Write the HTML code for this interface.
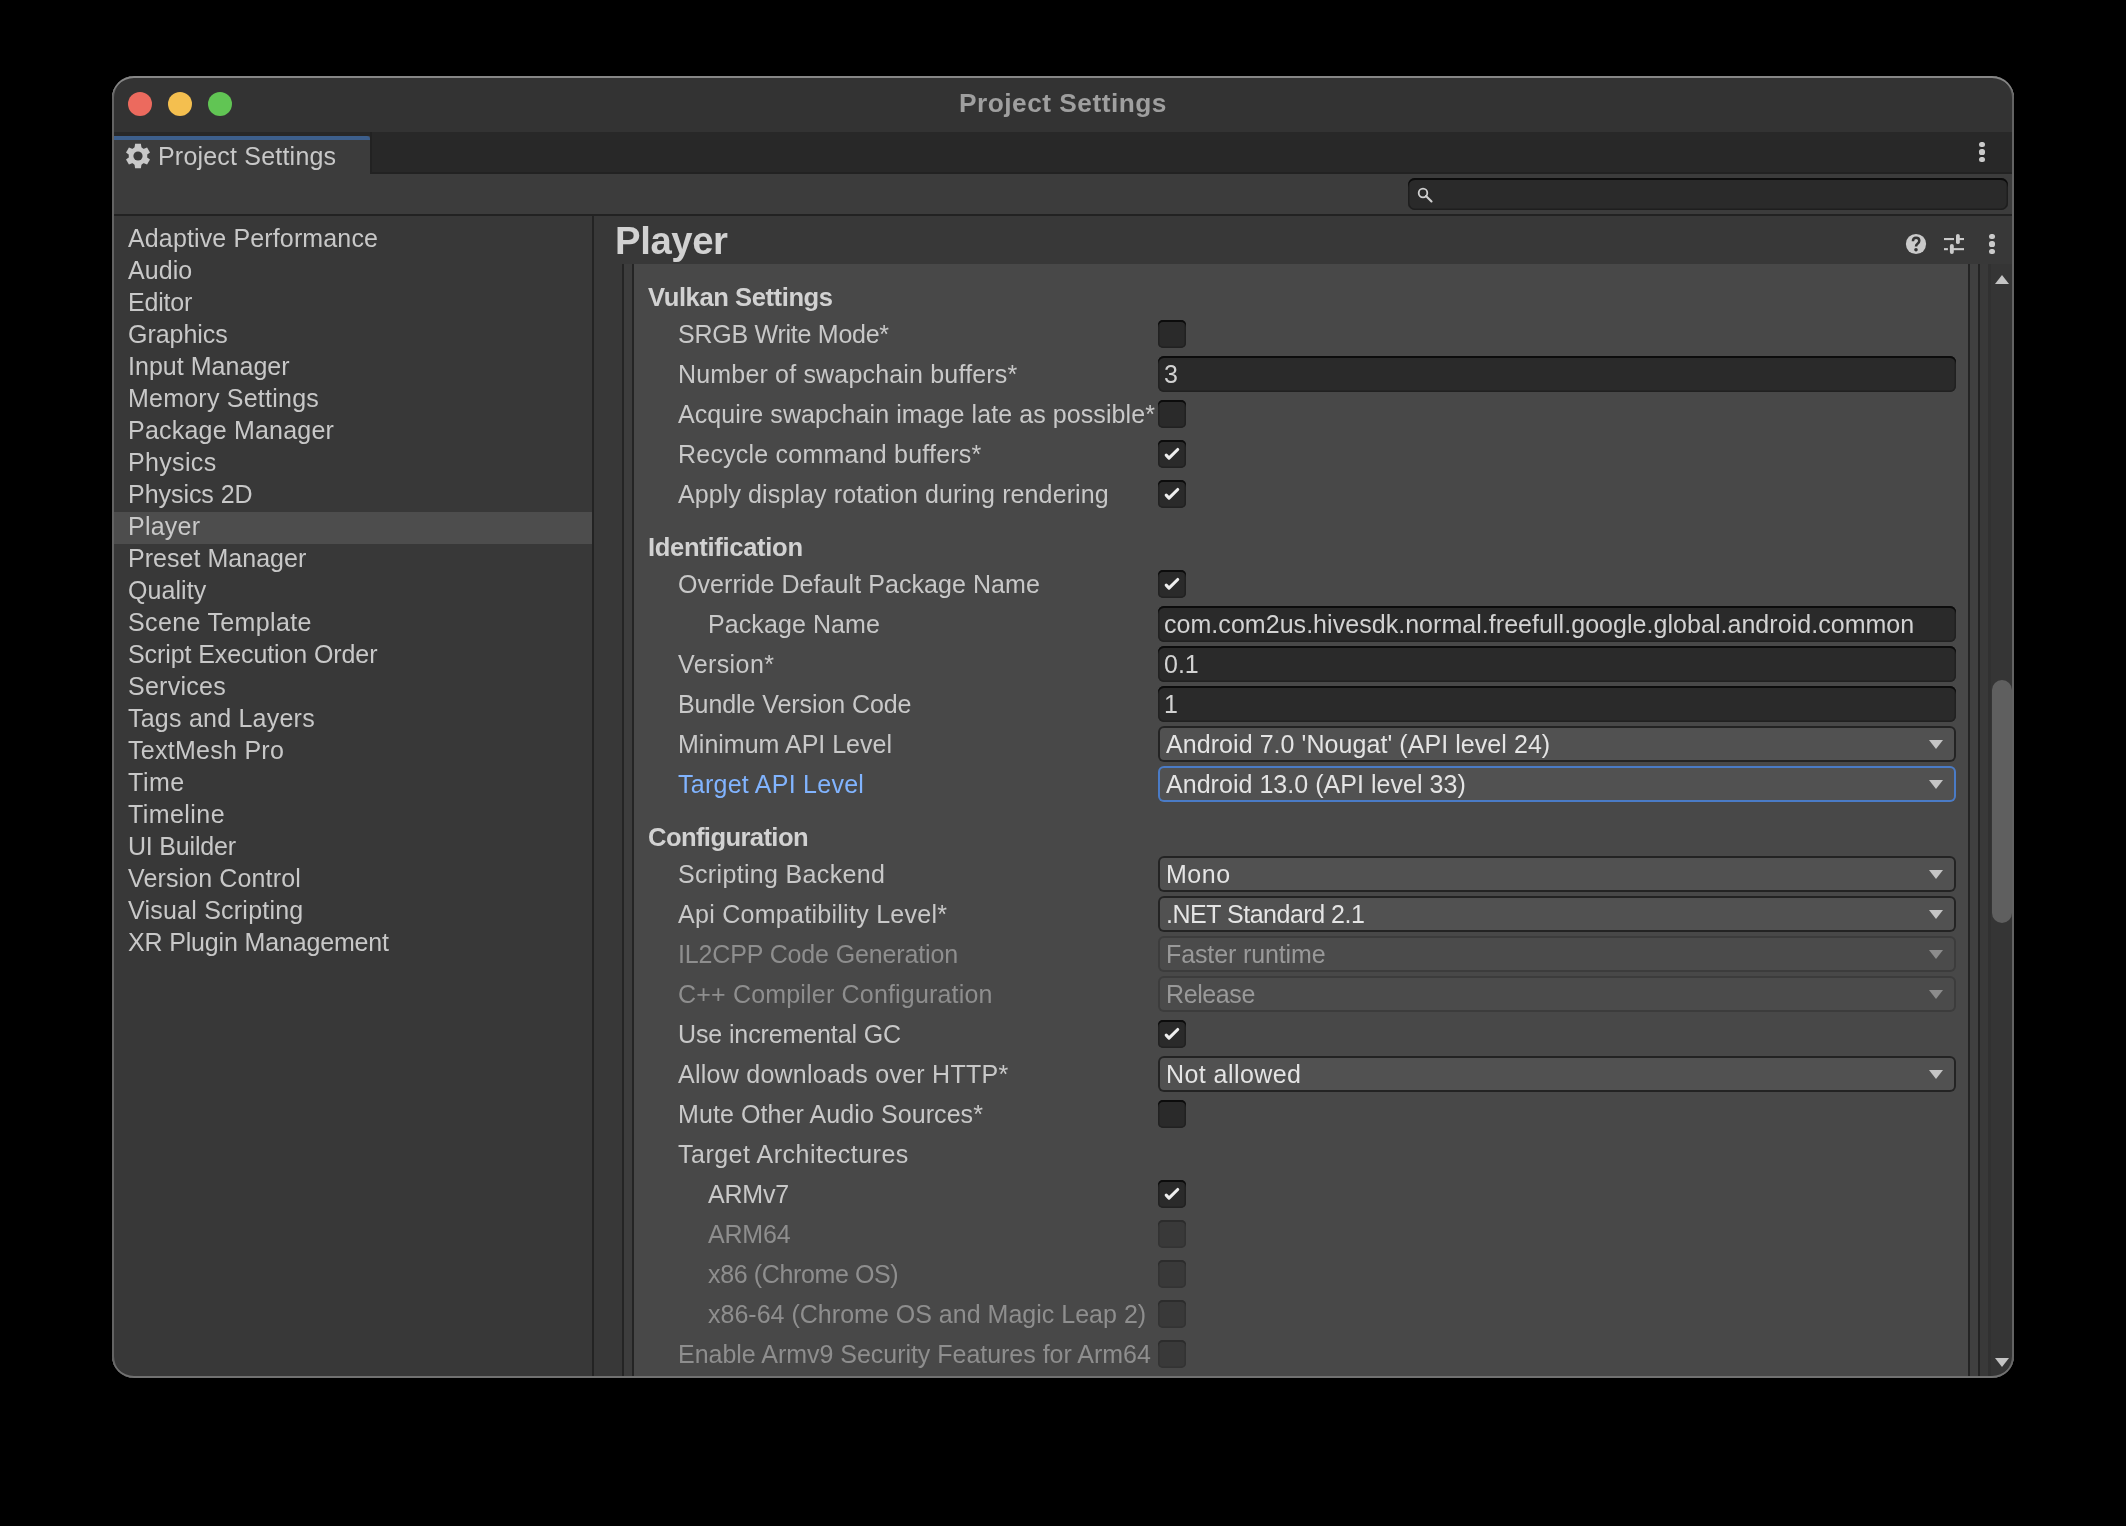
<!DOCTYPE html>
<html><head><meta charset="utf-8"><title>Project Settings</title>
<style>
html,body{margin:0;padding:0;background:#000;width:2126px;height:1526px;overflow:hidden;}
body{position:relative;font-family:"Liberation Sans",sans-serif;}
.t{position:absolute;white-space:nowrap;will-change:transform;}
.r{position:absolute;}
</style></head><body>
<div style="position:absolute;left:0;top:0;width:2126px;height:1526px;clip-path:inset(76px 112px 148px 112px round 22px)">
<div class="r" style="left:112px;top:76px;width:1902px;height:1302px;background:#383838"></div>
<div class="r" style="left:112px;top:76px;width:1902px;height:56px;background:#333333"></div>
<div class="r" style="left:128px;top:92px;width:24px;height:24px;background:#ec6a5e;border-radius:50%"></div>
<div class="r" style="left:168px;top:92px;width:24px;height:24px;background:#f4bf4f;border-radius:50%"></div>
<div class="r" style="left:208px;top:92px;width:24px;height:24px;background:#61c554;border-radius:50%"></div>
<div class="t" style="left:959.00px;top:82.99px;font-size:26.3px;line-height:40px;color:#9f9f9f;font-weight:700;letter-spacing:0.480px;">Project Settings</div>
<div class="r" style="left:112px;top:132px;width:1902px;height:42px;background:#282828"></div>
<div class="r" style="left:370px;top:132px;width:1644px;height:42px;background:#282828;box-shadow:inset 2px -2px 0 #222222"></div>
<div class="r" style="left:112px;top:136px;width:258px;height:38px;background:#3c3c3c"></div>
<div class="r" style="left:112px;top:136px;width:258px;height:4px;background:#3d5f8c;border-top-right-radius:3px"></div>
<svg class="r" style="left:125px;top:143px" width="26" height="26" viewBox="0 0 26 26"><g fill="#c9c9c9" transform="translate(13 13)"><circle r="9.3"/><path d="M-3.6 -7.5 L-2.9 -12.15 L2.9 -12.15 L3.6 -7.5 Z" transform="rotate(0)"/><path d="M-3.6 -7.5 L-2.9 -12.15 L2.9 -12.15 L3.6 -7.5 Z" transform="rotate(60)"/><path d="M-3.6 -7.5 L-2.9 -12.15 L2.9 -12.15 L3.6 -7.5 Z" transform="rotate(120)"/><path d="M-3.6 -7.5 L-2.9 -12.15 L2.9 -12.15 L3.6 -7.5 Z" transform="rotate(180)"/><path d="M-3.6 -7.5 L-2.9 -12.15 L2.9 -12.15 L3.6 -7.5 Z" transform="rotate(240)"/><path d="M-3.6 -7.5 L-2.9 -12.15 L2.9 -12.15 L3.6 -7.5 Z" transform="rotate(300)"/></g><circle cx="13" cy="13" r="4.6" fill="#3c3c3c"/></svg>
<div class="t" style="left:158.00px;top:135.94px;font-size:25px;line-height:40px;color:#c8c8c8;font-weight:400;letter-spacing:0.200px;">Project Settings</div>
<div class="r" style="left:1979.4px;top:141.9px;width:5.2px;height:5.2px;background:#cacaca;border-radius:50%"></div>
<div class="r" style="left:1979.4px;top:149.4px;width:5.2px;height:5.2px;background:#cacaca;border-radius:50%"></div>
<div class="r" style="left:1979.4px;top:156.9px;width:5.2px;height:5.2px;background:#cacaca;border-radius:50%"></div>
<div class="r" style="left:112px;top:174px;width:1902px;height:40px;background:#3c3c3c"></div>
<div class="r" style="left:1408px;top:178px;width:600px;height:32px;background:#2a2a2a;border-radius:7px;box-shadow: inset 0 2px 0 #0c0c0c, inset 0 0 0 1.5px #1e1e1e;"></div>
<svg class="r" style="left:1415px;top:185px" width="20" height="20" viewBox="0 0 20 20"><circle cx="8" cy="8" r="4.3" fill="none" stroke="#d0d0d0" stroke-width="1.8"/><path d="M11 11 L16.5 16.5" stroke="#d0d0d0" stroke-width="2.1" stroke-linecap="round"/></svg>
<div class="r" style="left:112px;top:214px;width:1902px;height:2px;background:#222222"></div>
<div class="r" style="left:112px;top:216px;width:480px;height:1162px;background:#383838"></div>
<div class="r" style="left:592px;top:216px;width:2px;height:1162px;background:#232323"></div>
<div class="t" style="left:128.40px;top:217.74px;font-size:25px;line-height:40px;color:#c8c8c8;font-weight:400;letter-spacing:0.137px;">Adaptive Performance</div>
<div class="t" style="left:128.40px;top:249.74px;font-size:25px;line-height:40px;color:#c8c8c8;font-weight:400;letter-spacing:0.050px;">Audio</div>
<div class="t" style="left:128.40px;top:281.74px;font-size:25px;line-height:40px;color:#c8c8c8;font-weight:400;letter-spacing:-0.200px;">Editor</div>
<div class="t" style="left:128.40px;top:313.74px;font-size:25px;line-height:40px;color:#c8c8c8;font-weight:400;letter-spacing:-0.029px;">Graphics</div>
<div class="t" style="left:128.40px;top:345.74px;font-size:25px;line-height:40px;color:#c8c8c8;font-weight:400;letter-spacing:0.033px;">Input Manager</div>
<div class="t" style="left:128.40px;top:377.74px;font-size:25px;line-height:40px;color:#c8c8c8;font-weight:400;letter-spacing:0.229px;">Memory Settings</div>
<div class="t" style="left:128.40px;top:409.74px;font-size:25px;line-height:40px;color:#c8c8c8;font-weight:400;letter-spacing:0.214px;">Package Manager</div>
<div class="t" style="left:128.40px;top:441.74px;font-size:25px;line-height:40px;color:#c8c8c8;font-weight:400;letter-spacing:0.333px;">Physics</div>
<div class="t" style="left:128.40px;top:473.74px;font-size:25px;line-height:40px;color:#c8c8c8;font-weight:400;letter-spacing:-0.044px;">Physics 2D</div>
<div class="r" style="left:112px;top:512px;width:480px;height:32px;background:#4d4d4d"></div>
<div class="t" style="left:128.40px;top:505.74px;font-size:25px;line-height:40px;color:#c8c8c8;font-weight:400;letter-spacing:0.240px;">Player</div>
<div class="t" style="left:128.40px;top:537.74px;font-size:25px;line-height:40px;color:#c8c8c8;font-weight:400;letter-spacing:0.031px;">Preset Manager</div>
<div class="t" style="left:128.40px;top:569.74px;font-size:25px;line-height:40px;color:#c8c8c8;font-weight:400;letter-spacing:0.067px;">Quality</div>
<div class="t" style="left:128.40px;top:601.74px;font-size:25px;line-height:40px;color:#c8c8c8;font-weight:400;letter-spacing:0.354px;">Scene Template</div>
<div class="t" style="left:128.40px;top:633.74px;font-size:25px;line-height:40px;color:#c8c8c8;font-weight:400;letter-spacing:-0.095px;">Script Execution Order</div>
<div class="t" style="left:128.40px;top:665.74px;font-size:25px;line-height:40px;color:#c8c8c8;font-weight:400;letter-spacing:0.257px;">Services</div>
<div class="t" style="left:128.40px;top:697.74px;font-size:25px;line-height:40px;color:#c8c8c8;font-weight:400;letter-spacing:0.229px;">Tags and Layers</div>
<div class="t" style="left:128.40px;top:729.74px;font-size:25px;line-height:40px;color:#c8c8c8;font-weight:400;letter-spacing:0.273px;">TextMesh Pro</div>
<div class="t" style="left:128.40px;top:761.74px;font-size:25px;line-height:40px;color:#c8c8c8;font-weight:400;letter-spacing:0.533px;">Time</div>
<div class="t" style="left:128.40px;top:793.74px;font-size:25px;line-height:40px;color:#c8c8c8;font-weight:400;letter-spacing:0.429px;">Timeline</div>
<div class="t" style="left:128.40px;top:825.74px;font-size:25px;line-height:40px;color:#c8c8c8;font-weight:400;letter-spacing:-0.200px;">UI Builder</div>
<div class="t" style="left:128.40px;top:857.74px;font-size:25px;line-height:40px;color:#c8c8c8;font-weight:400;letter-spacing:0.129px;">Version Control</div>
<div class="t" style="left:128.40px;top:889.74px;font-size:25px;line-height:40px;color:#c8c8c8;font-weight:400;letter-spacing:0.227px;">Visual Scripting</div>
<div class="t" style="left:128.40px;top:921.74px;font-size:25px;line-height:40px;color:#c8c8c8;font-weight:400;letter-spacing:-0.158px;">XR Plugin Management</div>
<div class="r" style="left:594px;top:216px;width:1418px;height:48px;background:#383838"></div>
<div class="t" style="left:615.00px;top:220.83px;font-size:38.3px;line-height:40px;color:#d2d2d2;font-weight:700;letter-spacing:-0.400px;">Player</div>
<svg class="r" style="left:1904px;top:232px" width="24" height="24" viewBox="0 0 24 24"><circle cx="12" cy="12" r="10.1" fill="#cacaca"/><path d="M8.9 9.3 C8.9 7 10.3 5.8 12.1 5.8 C14 5.8 15.3 7 15.3 8.8 C15.3 10.5 14.2 11.2 13.3 11.9 C12.5 12.5 12 13.1 12 14.4" fill="none" stroke="#333333" stroke-width="2.5"/><circle cx="12" cy="17.7" r="1.8" fill="#333333"/></svg>
<svg class="r" style="left:1942px;top:232px" width="24" height="24" viewBox="0 0 24 24"><g fill="#cacaca"><rect x="2" y="6" width="10" height="2.1"/><rect x="17" y="6" width="5" height="2.1"/><rect x="14" y="1.9" width="3.8" height="10.2" rx="1.9"/><rect x="2" y="16.1" width="3.9" height="2.1"/><rect x="11" y="16.1" width="11" height="2.1"/><rect x="7.9" y="12" width="3.9" height="10" rx="1.9"/></g></svg>
<div class="r" style="left:1989.4px;top:233.9px;width:5.2px;height:5.2px;background:#cacaca;border-radius:50%"></div>
<div class="r" style="left:1989.4px;top:241.4px;width:5.2px;height:5.2px;background:#cacaca;border-radius:50%"></div>
<div class="r" style="left:1989.4px;top:248.9px;width:5.2px;height:5.2px;background:#cacaca;border-radius:50%"></div>
<div class="r" style="left:594px;top:264px;width:1418px;height:1114px;background:#383838"></div>
<div class="r" style="left:622px;top:264px;width:2px;height:1114px;background:#242424"></div>
<div class="r" style="left:624px;top:264px;width:8px;height:1114px;background:#3d3d3d"></div>
<div class="r" style="left:632px;top:264px;width:2px;height:1114px;background:#242424"></div>
<div class="r" style="left:634px;top:264px;width:1334px;height:1114px;background:#484848"></div>
<div class="r" style="left:1968px;top:264px;width:2px;height:1114px;background:#242424"></div>
<div class="r" style="left:1970px;top:264px;width:8px;height:1114px;background:#404040"></div>
<div class="r" style="left:1978px;top:264px;width:2px;height:1114px;background:#242424"></div>
<div class="r" style="left:1980px;top:264px;width:8px;height:1114px;background:#393939"></div>
<div class="r" style="left:1988px;top:264px;width:24px;height:1114px;background:#353535"></div>
<div class="r" style="left:1988px;top:264px;width:3px;height:1114px;background:#313131"></div>
<svg class="r" style="left:1994px;top:274px" width="16" height="12" viewBox="0 0 16 12"><path d="M1 10 H15 L8 1 Z" fill="#c4c4c4"/></svg>
<svg class="r" style="left:1994px;top:1357px" width="16" height="12" viewBox="0 0 16 12"><path d="M1 1 H15 L8 10 Z" fill="#c4c4c4"/></svg>
<div class="r" style="left:1992px;top:680px;width:19.5px;height:243px;background:#5f5f5f;border-radius:10px"></div>
<div class="t" style="left:648.20px;top:277.33px;font-size:25.6px;line-height:40px;color:#d2d2d2;font-weight:700;letter-spacing:-0.429px;">Vulkan Settings</div>
<div class="t" style="left:678.40px;top:314.34px;font-size:25px;line-height:40px;color:#c8c8c8;font-weight:400;letter-spacing:-0.253px;">SRGB Write Mode*</div>
<div class="r" style="left:1158px;top:320px;width:28px;height:28px;background:#2a2a2a;border-radius:5px;box-shadow: inset 0 2px 0 #0c0c0c, inset 0 0 0 1.5px #212121;"></div>
<div class="t" style="left:678.40px;top:354.34px;font-size:25px;line-height:40px;color:#c8c8c8;font-weight:400;letter-spacing:0.178px;">Number of swapchain buffers*</div>
<div class="r" style="left:1158px;top:356px;width:798px;height:36px;background:#2a2a2a;border-radius:6px;box-shadow: inset 0 2px 0 #0c0c0c, inset 0 0 0 1.5px #212121;"></div>
<div class="t" style="left:1164.20px;top:354.34px;font-size:25px;line-height:40px;color:#d2d2d2;font-weight:400;">3</div>
<div class="t" style="left:678.40px;top:394.34px;font-size:25px;line-height:40px;color:#c8c8c8;font-weight:400;letter-spacing:0.075px;">Acquire swapchain image late as possible*</div>
<div class="r" style="left:1158px;top:400px;width:28px;height:28px;background:#2a2a2a;border-radius:5px;box-shadow: inset 0 2px 0 #0c0c0c, inset 0 0 0 1.5px #212121;"></div>
<div class="t" style="left:678.40px;top:434.34px;font-size:25px;line-height:40px;color:#c8c8c8;font-weight:400;letter-spacing:0.217px;">Recycle command buffers*</div>
<div class="r" style="left:1158px;top:440px;width:28px;height:28px;background:#2a2a2a;border-radius:5px;box-shadow: inset 0 2px 0 #0c0c0c, inset 0 0 0 1.5px #212121;"><svg width="28" height="28" viewBox="0 0 28 28" style="position:absolute;left:0;top:0"><path d="M8.2 15.2 L11 18.1 L19.7 9.5" fill="none" stroke="#eeeeee" stroke-width="3.1" stroke-linecap="round" stroke-linejoin="round"/></svg></div>
<div class="t" style="left:678.40px;top:474.34px;font-size:25px;line-height:40px;color:#c8c8c8;font-weight:400;letter-spacing:0.105px;">Apply display rotation during rendering</div>
<div class="r" style="left:1158px;top:480px;width:28px;height:28px;background:#2a2a2a;border-radius:5px;box-shadow: inset 0 2px 0 #0c0c0c, inset 0 0 0 1.5px #212121;"><svg width="28" height="28" viewBox="0 0 28 28" style="position:absolute;left:0;top:0"><path d="M8.2 15.2 L11 18.1 L19.7 9.5" fill="none" stroke="#eeeeee" stroke-width="3.1" stroke-linecap="round" stroke-linejoin="round"/></svg></div>
<div class="t" style="left:648.20px;top:527.33px;font-size:25.6px;line-height:40px;color:#d2d2d2;font-weight:700;letter-spacing:-0.323px;">Identification</div>
<div class="t" style="left:678.40px;top:564.34px;font-size:25px;line-height:40px;color:#c8c8c8;font-weight:400;letter-spacing:0.071px;">Override Default Package Name</div>
<div class="r" style="left:1158px;top:570px;width:28px;height:28px;background:#2a2a2a;border-radius:5px;box-shadow: inset 0 2px 0 #0c0c0c, inset 0 0 0 1.5px #212121;"><svg width="28" height="28" viewBox="0 0 28 28" style="position:absolute;left:0;top:0"><path d="M8.2 15.2 L11 18.1 L19.7 9.5" fill="none" stroke="#eeeeee" stroke-width="3.1" stroke-linecap="round" stroke-linejoin="round"/></svg></div>
<div class="t" style="left:708.40px;top:604.34px;font-size:25px;line-height:40px;color:#c8c8c8;font-weight:400;letter-spacing:0.091px;">Package Name</div>
<div class="r" style="left:1158px;top:606px;width:798px;height:36px;background:#2a2a2a;border-radius:6px;box-shadow: inset 0 2px 0 #0c0c0c, inset 0 0 0 1.5px #212121;"></div>
<div class="t" style="left:1164.20px;top:604.34px;font-size:25px;line-height:40px;color:#d2d2d2;font-weight:400;letter-spacing:0.042px;">com.com2us.hivesdk.normal.freefull.google.global.android.common</div>
<div class="t" style="left:678.40px;top:644.34px;font-size:25px;line-height:40px;color:#c8c8c8;font-weight:400;letter-spacing:0.400px;">Version*</div>
<div class="r" style="left:1158px;top:646px;width:798px;height:36px;background:#2a2a2a;border-radius:6px;box-shadow: inset 0 2px 0 #0c0c0c, inset 0 0 0 1.5px #212121;"></div>
<div class="t" style="left:1164.20px;top:644.34px;font-size:25px;line-height:40px;color:#d2d2d2;font-weight:400;">0.1</div>
<div class="t" style="left:678.40px;top:684.34px;font-size:25px;line-height:40px;color:#c8c8c8;font-weight:400;letter-spacing:-0.078px;">Bundle Version Code</div>
<div class="r" style="left:1158px;top:686px;width:798px;height:36px;background:#2a2a2a;border-radius:6px;box-shadow: inset 0 2px 0 #0c0c0c, inset 0 0 0 1.5px #212121;"></div>
<div class="t" style="left:1164.20px;top:684.34px;font-size:25px;line-height:40px;color:#d2d2d2;font-weight:400;">1</div>
<div class="t" style="left:678.40px;top:724.34px;font-size:25px;line-height:40px;color:#c8c8c8;font-weight:400;">Minimum API Level</div>
<div class="r" style="left:1158px;top:726px;width:798px;height:36px;background:#515151;border-radius:6px;box-shadow: inset 0 0 0 2px #232323;"></div>
<div class="t" style="left:1166.30px;top:723.54px;font-size:25px;line-height:40px;color:#e4e4e4;font-weight:400;letter-spacing:0.065px;">Android 7.0 'Nougat' (API level 24)</div>
<div class="r" style="left:1929px;top:740px;width:14px;height:9px;"><svg width="14" height="9" viewBox="0 0 14 9" style="position:absolute;left:0;top:0"><path d="M0 0 H14 L7 9 Z" fill="#c4c4c4"/></svg></div>
<div class="t" style="left:678.40px;top:764.34px;font-size:25px;line-height:40px;color:#81b4ff;font-weight:400;letter-spacing:0.253px;">Target API Level</div>
<div class="r" style="left:1158px;top:766px;width:798px;height:36px;background:#515151;border-radius:6px;box-shadow: inset 0 0 0 2px #4a7bc6;"></div>
<div class="t" style="left:1166.30px;top:763.54px;font-size:25px;line-height:40px;color:#e4e4e4;font-weight:400;letter-spacing:0.038px;">Android 13.0 (API level 33)</div>
<div class="r" style="left:1929px;top:780px;width:14px;height:9px;"><svg width="14" height="9" viewBox="0 0 14 9" style="position:absolute;left:0;top:0"><path d="M0 0 H14 L7 9 Z" fill="#c4c4c4"/></svg></div>
<div class="t" style="left:648.20px;top:817.33px;font-size:25.6px;line-height:40px;color:#d2d2d2;font-weight:700;letter-spacing:-0.600px;">Configuration</div>
<div class="t" style="left:678.40px;top:854.34px;font-size:25px;line-height:40px;color:#c8c8c8;font-weight:400;letter-spacing:0.337px;">Scripting Backend</div>
<div class="r" style="left:1158px;top:856px;width:798px;height:36px;background:#515151;border-radius:6px;box-shadow: inset 0 0 0 2px #232323;"></div>
<div class="t" style="left:1166.30px;top:853.54px;font-size:25px;line-height:40px;color:#e4e4e4;font-weight:400;letter-spacing:0.533px;">Mono</div>
<div class="r" style="left:1929px;top:870px;width:14px;height:9px;"><svg width="14" height="9" viewBox="0 0 14 9" style="position:absolute;left:0;top:0"><path d="M0 0 H14 L7 9 Z" fill="#c4c4c4"/></svg></div>
<div class="t" style="left:678.40px;top:894.34px;font-size:25px;line-height:40px;color:#c8c8c8;font-weight:400;letter-spacing:0.278px;">Api Compatibility Level*</div>
<div class="r" style="left:1158px;top:896px;width:798px;height:36px;background:#515151;border-radius:6px;box-shadow: inset 0 0 0 2px #232323;"></div>
<div class="t" style="left:1166.30px;top:893.54px;font-size:25px;line-height:40px;color:#e4e4e4;font-weight:400;letter-spacing:-0.487px;">.NET Standard 2.1</div>
<div class="r" style="left:1929px;top:910px;width:14px;height:9px;"><svg width="14" height="9" viewBox="0 0 14 9" style="position:absolute;left:0;top:0"><path d="M0 0 H14 L7 9 Z" fill="#c4c4c4"/></svg></div>
<div class="t" style="left:678.40px;top:934.34px;font-size:25px;line-height:40px;color:#8e8e8e;font-weight:400;letter-spacing:-0.143px;">IL2CPP Code Generation</div>
<div class="r" style="left:1158px;top:936px;width:798px;height:36px;background:#4b4b4b;border-radius:6px;box-shadow: inset 0 0 0 2px #3c3c3c;"></div>
<div class="t" style="left:1166.30px;top:933.54px;font-size:25px;line-height:40px;color:#999999;font-weight:400;letter-spacing:-0.123px;">Faster runtime</div>
<div class="r" style="left:1929px;top:950px;width:14px;height:9px;"><svg width="14" height="9" viewBox="0 0 14 9" style="position:absolute;left:0;top:0"><path d="M0 0 H14 L7 9 Z" fill="#8c8c8c"/></svg></div>
<div class="t" style="left:678.40px;top:974.34px;font-size:25px;line-height:40px;color:#8e8e8e;font-weight:400;letter-spacing:0.184px;">C++ Compiler Configuration</div>
<div class="r" style="left:1158px;top:976px;width:798px;height:36px;background:#4b4b4b;border-radius:6px;box-shadow: inset 0 0 0 2px #3c3c3c;"></div>
<div class="t" style="left:1166.30px;top:973.54px;font-size:25px;line-height:40px;color:#999999;font-weight:400;letter-spacing:-0.400px;">Release</div>
<div class="r" style="left:1929px;top:990px;width:14px;height:9px;"><svg width="14" height="9" viewBox="0 0 14 9" style="position:absolute;left:0;top:0"><path d="M0 0 H14 L7 9 Z" fill="#8c8c8c"/></svg></div>
<div class="t" style="left:678.40px;top:1014.34px;font-size:25px;line-height:40px;color:#c8c8c8;font-weight:400;letter-spacing:-0.118px;">Use incremental GC</div>
<div class="r" style="left:1158px;top:1020px;width:28px;height:28px;background:#2a2a2a;border-radius:5px;box-shadow: inset 0 2px 0 #0c0c0c, inset 0 0 0 1.5px #212121;"><svg width="28" height="28" viewBox="0 0 28 28" style="position:absolute;left:0;top:0"><path d="M8.2 15.2 L11 18.1 L19.7 9.5" fill="none" stroke="#eeeeee" stroke-width="3.1" stroke-linecap="round" stroke-linejoin="round"/></svg></div>
<div class="t" style="left:678.40px;top:1054.34px;font-size:25px;line-height:40px;color:#c8c8c8;font-weight:400;letter-spacing:0.256px;">Allow downloads over HTTP*</div>
<div class="r" style="left:1158px;top:1056px;width:798px;height:36px;background:#515151;border-radius:6px;box-shadow: inset 0 0 0 2px #232323;"></div>
<div class="t" style="left:1166.30px;top:1053.54px;font-size:25px;line-height:40px;color:#e4e4e4;font-weight:400;letter-spacing:0.440px;">Not allowed</div>
<div class="r" style="left:1929px;top:1070px;width:14px;height:9px;"><svg width="14" height="9" viewBox="0 0 14 9" style="position:absolute;left:0;top:0"><path d="M0 0 H14 L7 9 Z" fill="#c4c4c4"/></svg></div>
<div class="t" style="left:678.40px;top:1094.34px;font-size:25px;line-height:40px;color:#c8c8c8;font-weight:400;letter-spacing:0.083px;">Mute Other Audio Sources*</div>
<div class="r" style="left:1158px;top:1100px;width:28px;height:28px;background:#2a2a2a;border-radius:5px;box-shadow: inset 0 2px 0 #0c0c0c, inset 0 0 0 1.5px #212121;"></div>
<div class="t" style="left:678.40px;top:1134.34px;font-size:25px;line-height:40px;color:#c8c8c8;font-weight:400;letter-spacing:0.495px;">Target Architectures</div>
<div class="t" style="left:708.40px;top:1174.34px;font-size:25px;line-height:40px;color:#c8c8c8;font-weight:400;letter-spacing:-0.200px;">ARMv7</div>
<div class="r" style="left:1158px;top:1180px;width:28px;height:28px;background:#2a2a2a;border-radius:5px;box-shadow: inset 0 2px 0 #0c0c0c, inset 0 0 0 1.5px #212121;"><svg width="28" height="28" viewBox="0 0 28 28" style="position:absolute;left:0;top:0"><path d="M8.2 15.2 L11 18.1 L19.7 9.5" fill="none" stroke="#eeeeee" stroke-width="3.1" stroke-linecap="round" stroke-linejoin="round"/></svg></div>
<div class="t" style="left:708.40px;top:1214.34px;font-size:25px;line-height:40px;color:#8e8e8e;font-weight:400;letter-spacing:-0.200px;">ARM64</div>
<div class="r" style="left:1158px;top:1220px;width:28px;height:28px;background:#393939;border-radius:5px;box-shadow: inset 0 2px 0 #2c2c2c, inset 0 0 0 1.5px #333;"></div>
<div class="t" style="left:708.40px;top:1254.34px;font-size:25px;line-height:40px;color:#8e8e8e;font-weight:400;letter-spacing:-0.371px;">x86 (Chrome OS)</div>
<div class="r" style="left:1158px;top:1260px;width:28px;height:28px;background:#393939;border-radius:5px;box-shadow: inset 0 2px 0 #2c2c2c, inset 0 0 0 1.5px #333;"></div>
<div class="t" style="left:708.40px;top:1294.34px;font-size:25px;line-height:40px;color:#8e8e8e;font-weight:400;letter-spacing:0.012px;">x86-64 (Chrome OS and Magic Leap 2)</div>
<div class="r" style="left:1158px;top:1300px;width:28px;height:28px;background:#393939;border-radius:5px;box-shadow: inset 0 2px 0 #2c2c2c, inset 0 0 0 1.5px #333;"></div>
<div class="t" style="left:678.40px;top:1334.34px;font-size:25px;line-height:40px;color:#8e8e8e;font-weight:400;letter-spacing:-0.026px;">Enable Armv9 Security Features for Arm64</div>
<div class="r" style="left:1158px;top:1340px;width:28px;height:28px;background:#393939;border-radius:5px;box-shadow: inset 0 2px 0 #2c2c2c, inset 0 0 0 1.5px #333;"></div>
</div>
<div class="r" style="left:112px;top:76px;width:1902px;height:1302px;border-radius:22px;box-shadow:inset 0 2px 0 #868686, inset 0 -2px 0 #717171, inset 2px 0 0 #636363, inset -2px 0 0 #636363;"></div>
</body></html>
